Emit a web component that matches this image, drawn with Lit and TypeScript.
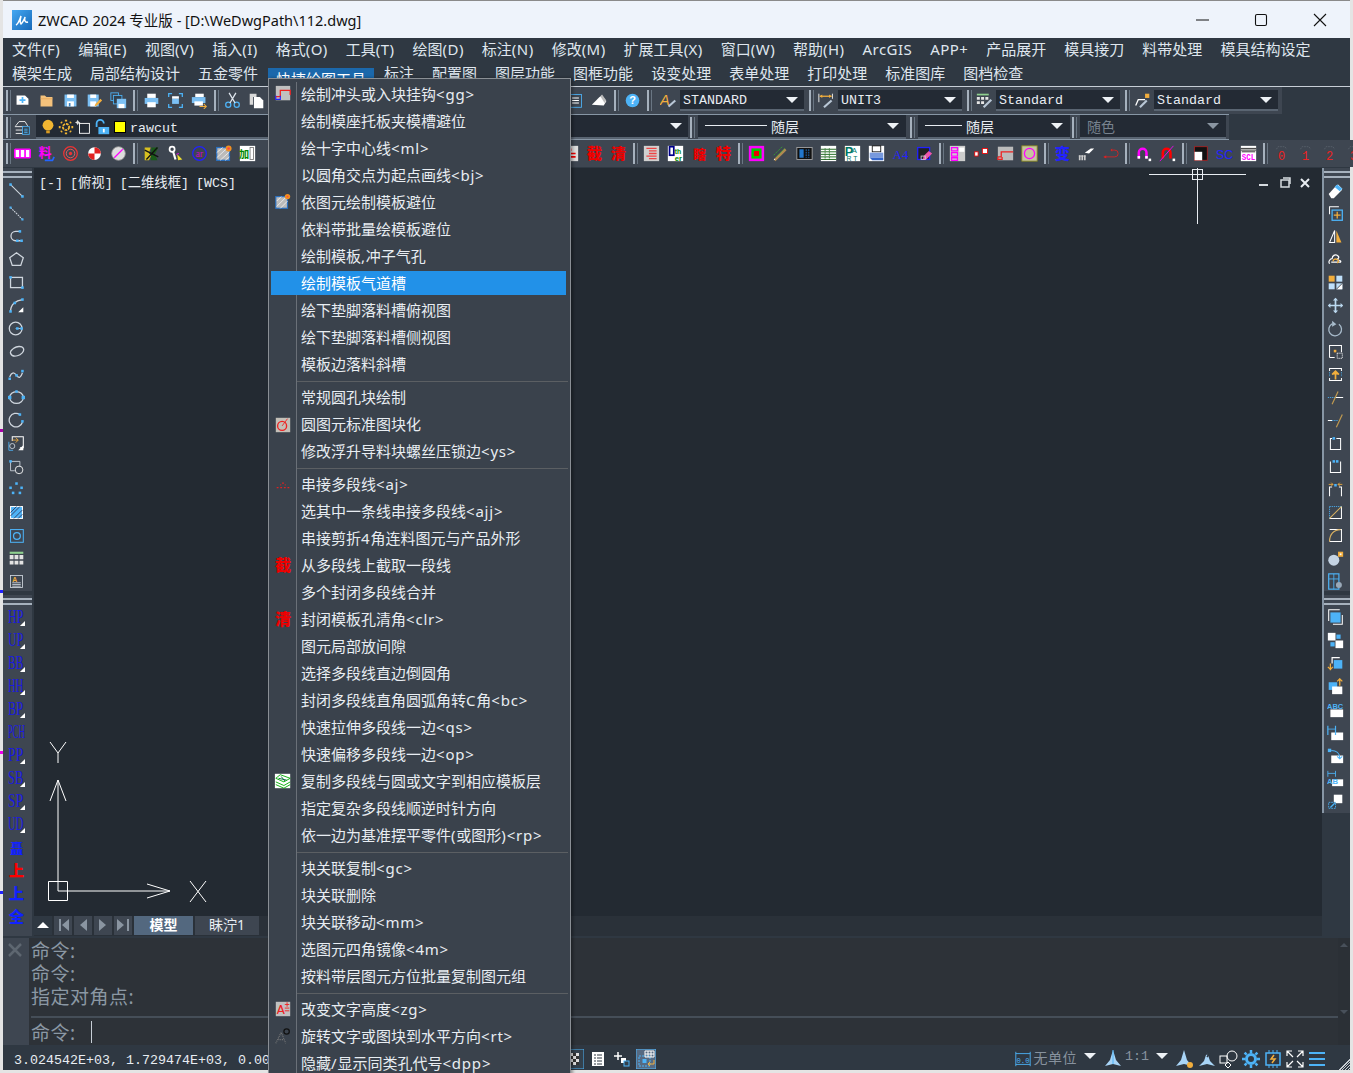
import { LitElement, css, html, svg } from "lit";
import { customElement } from "lit/decorators.js";

const B = "#4db3f7";
const O = "#f2ae3d";
const W = "#ffffff";
const CJK = "Noto Sans CJK SC";

const mk = (inner: unknown, size = 20) => html`<svg class="ic" width=${size} height=${size} viewBox="0 0 20 20">${inner}</svg>`;
const hanzi = (t: string, c: string, size = 18) =>
  svg`<text x="10" y="16.500" text-anchor="middle" font-family=${CJK} font-weight="900" font-size=${size} fill=${c}>${t}</text>`;
const paper = (c = "#ddd") => svg`<rect x="1" y="1" width="18" height="18" fill=${c}/>`;
// ascii runs get a little extra tracking, they come out narrower than in the reference
const latin = (t: string) =>
  t.split(/([\x20-\x7e]+)/).map((p, i) => (i % 2 ? html`<i class="lat">${p}</i>` : p));

// top toolbars
const top1 = {
  newf: svg`<path d="M3 4h10l4 4v7H3z" fill=${W}/><path d="M10 6v7M6.500 9.500h7" stroke=${B} stroke-width="2"/>`,
  open: svg`<path d="M3 4h5l2 2h7v11H3z" fill="#f4c27c"/><path d="M3 8h14" stroke="#e6a657"/>`,
  save: svg`<rect x="3" y="3" width="14" height="14" fill="#7cc0f4"/><rect x="6" y="3" width="8" height="4" fill=${W}/><rect x="6" y="11" width="8" height="6" fill=${W}/><rect x="8" y="13" width="2" height="4" fill="#3c82bb"/>`,
  saveas: svg`<rect x="2" y="3" width="13" height="14" fill="#7cc0f4"/><rect x="5" y="3" width="7" height="4" fill=${W}/><rect x="5" y="11" width="7" height="6" fill=${W}/><path d="M10 17l1-3 6-6 2 2-6 6z" fill=${O}/>`,
  saveall: svg`<rect x="1" y="1" width="9" height="9" fill="none" stroke=${B}/><rect x="4" y="4" width="10" height="10" fill="#33404c" stroke=${B}/><rect x="8" y="8" width="11" height="11" fill="#7cc0f4"/><rect x="10" y="14" width="7" height="5" fill=${W}/>`,
  print: svg`<rect x="5" y="2" width="10" height="5" fill=${W}/><rect x="2" y="7" width="16" height="7" fill="#7cc0f4"/><rect x="5" y="12" width="10" height="6" fill=${W}/>`,
  preview: svg`<path d="M2 6V2h4M14 2h4v4M18 14v4h-4M6 18H2v-4" fill="none" stroke=${B} stroke-width="1.500"/><rect x="6" y="5" width="8" height="3" fill=${W}/><rect x="6" y="8" width="8" height="6" fill="#7cc0f4"/>`,
  plot: svg`<rect x="5" y="2" width="10" height="4" fill=${W}/><rect x="1" y="6" width="16" height="7" fill="#7cc0f4"/><rect x="4" y="11" width="10" height="5" fill=${W}/><path d="M10 17h8M15 14l3 3-3 3" fill="none" stroke=${O} stroke-width="1.200"/>`,
  cut: svg`<circle cx="5" cy="15" r="3" fill="none" stroke=${B} stroke-width="1.500"/><circle cx="15" cy="15" r="3" fill="none" stroke=${B} stroke-width="1.500"/><path d="M7 13L14 1M13 13L6 1" stroke="#dfe6ee" stroke-width="1.500"/>`,
  copy: svg`<path d="M2 2h8v4H6v9H2z" fill="#d8d8d8"/><path d="M7 6h7l4 4v9H7z" fill=${W}/>`,
  doc: svg`<rect x="2" y="3" width="15" height="15" fill="none" stroke=${B}/><path d="M6 7h8M6 10h8M6 13h8" stroke=${W} stroke-width="1.200"/>`,
  erase: svg`<path d="M1 15l9-9 3-2 5 7-3 5z" fill=${W}/><path d="M11 5l2-2 5 7-2 3z" fill="#bbb"/>`,
  help: svg`<circle cx="10" cy="10" r="8" fill=${B}/><text x="10" y="14.500" text-anchor="middle" font-family="Liberation Sans" font-size="13" font-weight="700" fill=${W}>?</text>`,
  textstyle: svg`<text x="0" y="15" font-family="Liberation Sans" font-size="17" font-style="italic" fill=${O}>A</text><path d="M10 17l8-7" stroke="#b9c7d6" stroke-width="2.500"/>`,
  dimstyle: svg`<path d="M1 2v10M17 2v6" stroke=${W}/><path d="M2 5h14" stroke=${O} stroke-width="1.500"/><path d="M2 5l3-2v4zM16 5l-3-2v4z" fill=${O}/><path d="M7 18l9-8" stroke="#b9c7d6" stroke-width="2.500"/>`,
  tablestyle: svg`<rect x="1" y="2" width="14" height="2" fill="#8fd08f"/><path d="M1 6h3.500v3H1zM6 6h3.500v3H6zM11 6h3.500v3H11zM1 11h3.500v3H1zM6 11h3.500v3H6z" fill="#e6e6e6"/><path d="M9 18l9-9" stroke="#b9c7d6" stroke-width="2.500"/>`,
  leader: svg`<rect x="13" y="2" width="5" height="5" fill=${O}/><path d="M2 16l3-7h8" fill="none" stroke=${W} stroke-width="1.500"/><path d="M7 18l8-8" stroke="#b9c7d6" stroke-width="2.500"/>`,
  layers: svg`<path d="M2 8l4-5h7l3 5" fill="none" stroke=${W}/><path d="M1 9h10M2 13h8M2 17h8" stroke=${W}/><rect x="10" y="9" width="8" height="9" fill="#33404c" stroke=${B}/><path d="M12 12h4M12 14h4M12 16h4" stroke=${B}/>`,
};

const row2icons = html`
  ${mk(svg`<circle cx="10" cy="8" r="6" fill="#f2b632"/><rect x="8" y="14" width="4" height="3" fill="#d99a20"/>`)}
  ${mk(svg`<circle cx="10" cy="10" r="3.500" fill="none" stroke="#f2b632" stroke-width="2" stroke-dasharray="3 1"/><path d="M10 2v2M10 16v2M2 10h2M16 10h2M4.500 4.500l1 1M14.500 14.500l1 1M15.500 4.500l-1 1M4.500 15.500l1-1" stroke="#f2b632" stroke-width="2.500"/>`)}
  ${mk(svg`<rect x="5" y="6" width="11" height="11" fill="none" stroke=${W}/><path d="M3 2l1 2 2 1-2 1-1 2-1-2-2-1 2-1z" fill="#ddd"/>`)}
  ${mk(svg`<path d="M4 10V6a4 4 0 0 1 8 0" fill="none" stroke=${B} stroke-width="2"/><rect x="6" y="10" width="12" height="8" fill=${B}/><rect x="11" y="12" width="2" height="4" fill=${W}/>`)}
`;

const row3left = [
  svg`<rect x="1" y="5" width="18" height="10" fill=${W}/><path d="M1 5h18M1 15h18" stroke="#f0f" stroke-width="2"/><path d="M1 5v10M7 5v10M13 5v10M19 5v10" stroke="#f0f" stroke-width="2"/>`,
  svg`<text x="1" y="14" font-family=${CJK} font-size="15" font-weight="700" fill="#f0f">料</text><path d="M8 18h9l2-4" fill="none" stroke="#26f" stroke-width="2"/>`,
  svg`<circle cx="10" cy="10" r="8" fill="none" stroke="#e33" stroke-width="1.500"/><circle cx="10" cy="10" r="5" fill="none" stroke="#e66"/><circle cx="10" cy="10" r="2" fill="#e33"/>`,
  svg`<circle cx="10" cy="10" r="7.500" fill=${W}/><path d="M10 10V2.500A7.500 7.500 0 0 1 17.500 10zM10 10v7.500A7.500 7.500 0 0 1 2.500 10z" fill="#e02020"/>`,
  svg`<circle cx="10" cy="10" r="8" fill="#ddd" stroke="#999"/><path d="M5 15L15 5" stroke="#f0f" stroke-width="1.500"/>`,
];
const row3mid = [
  svg`<path d="M2 3h7l-2 7 3 2-3 6H2z" fill="#d8c020"/><path d="M10 3l8 0-4 8 3 7-8 0z" fill="#1a5a1a"/><path d="M2 6l16 8M4 17L17 3" stroke="#111" stroke-width="1.500"/>`,
  svg`<circle cx="6" cy="5" r="3" fill="none" stroke=${W} stroke-width="2"/><path d="M7 7l3 10" stroke=${W} stroke-width="2.500"/><path d="M12 11l6 6-5 1z" fill="#f0e030"/><path d="M11 11l3-1" stroke="#f0f"/>`,
  svg`<circle cx="10" cy="10" r="8" fill="none" stroke="#22f" stroke-width="1.500"/><text x="10" y="14" text-anchor="middle" font-family="Liberation Serif" font-size="11" fill="#c0c">ar</text>`,
  svg`<rect x="2" y="3" width="15" height="15" fill="#bbb" stroke="#2a70c0" stroke-width="1.500"/><path d="M2 9l7-6M2 15l13-12M6 18L17 8M12 18l5-4" stroke="#eee"/><circle cx="16" cy="4" r="3.500" fill="#f29020"/><circle cx="16" cy="4" r="1.500" fill="#f44"/>`,
  svg`<rect x="1" y="1" width="18" height="18" fill=${W}/><text x="0" y="15" font-family=${CJK} font-size="12" font-weight="700" fill="#080">加</text><rect x="13" y="3" width="4" height="14" fill="none" stroke="#777"/>`,
];
const row3right = [
  [svg`<rect x="1" y="1" width="18" height="18" fill="#ddd"/><path d="M4 10h12M10 4v3M8 14h8" stroke="#e00" stroke-width="2"/>`, hanzi("截", "#e00"), hanzi("清", "#e00")],
  [
    svg`${paper("#d0d0d0")}<path d="M4 4h12M7 7h9M7 10h9M4 13h12M7 16h9" stroke="#e44" stroke-width="1.500"/>`,
    svg`${paper(W)}<rect x="2" y="1" width="7" height="12" fill="#00008a"/><rect x="4" y="3" width="3" height="8" fill=${W}/><text x="9" y="11" font-family="Liberation Sans" font-weight="700" font-size="8" fill="#080">th</text><text x="9" y="19" font-family="Liberation Sans" font-weight="700" font-size="9" fill="#080">er</text>`,
    hanzi("瞎", "#e00", 15),
    hanzi("特", "#e00"),
  ],
  [
    svg`<rect x="1" y="1" width="18" height="18" fill="#f0f"/><rect x="4" y="4" width="12" height="12" fill="#0c0"/><rect x="7" y="7" width="6" height="6" fill="#e00"/>`,
    svg`<path d="M3 18L16 5" stroke="#b08a50" stroke-width="3"/><path d="M2 12L12 2M5 14L15 4" stroke="#3a3" stroke-dasharray="2 1"/><path d="M2 18l2-1-1-1z" fill=${W}/>`,
    svg`<rect x="1" y="3" width="18" height="14" fill="#111" stroke="#aaa"/><rect x="4" y="5" width="5" height="10" fill="#27c"/><path d="M12 5v10M15 5v10" stroke="#27c" stroke-dasharray="2 1"/>`,
    svg`${paper(W)}<path d="M1 5h18M1 8h18M1 11h18M1 14h18M1 17h18" stroke="#050"/><path d="M6 4v14M11 4v14" stroke="#050" stroke-dasharray="1 1"/>`,
    svg`${paper(W)}<text x="1" y="13" font-family="Liberation Sans" font-weight="700" font-size="15" fill="#076">P</text><text x="9" y="9" font-family="Liberation Sans" font-size="9" fill="#076">A</text><text x="3" y="19" font-family="Liberation Sans" font-size="8" fill="#076">R</text><text x="11" y="19" font-family="Liberation Sans" font-size="8" fill="#076">T</text>`,
    svg`${paper(W)}<rect x="5" y="1" width="10" height="7" fill="none" stroke="#111"/><path d="M2 9h16v6H2z" fill="#79d"/><path d="M2 15l3 3h13v-3" fill="#36c"/>`,
    svg`<text x="10" y="16" text-anchor="middle" font-family="Liberation Serif" font-size="15" fill="#22f">A4</text>`,
    svg`<rect x="2" y="3" width="14" height="14" fill="#222" stroke="#22f" stroke-width="1.500"/><path d="M8 17l1-4 6-6 4 3-7 7z" fill="#e5a"/><rect x="6" y="13" width="5" height="4" fill="none" stroke="#ccc"/>`,
  ],
  [
    svg`<rect x="1" y="1" width="18" height="18" fill="#ccc"/><path d="M3 3h7v4H3zM3 9h7v4H3zM3 15h7v3H3z" fill="none" stroke="#f0f" stroke-width="1.500"/><path d="M12 3h6v5h-6z" fill=${W}/>`,
    svg`<rect x="2" y="8" width="4" height="5" fill=${W} stroke="#e00"/><rect x="11" y="4" width="6" height="6" fill=${W} stroke="#e00"/>`,
    svg`<rect x="1" y="2" width="18" height="16" fill="#bbb"/><path d="M1 14h4V8h14M5 8v6M1 14v3h5v-3" fill="none" stroke="#e22" stroke-width="1.500"/>`,
    svg`<rect x="1" y="1" width="18" height="18" fill="#c6c2a0" stroke="#8a8a20"/><circle cx="10" cy="10" r="6" fill="none" stroke="#f0f" stroke-width="1.500"/>`,
  ],
  [
    hanzi("变", "#22f"),
    svg`<path d="M2 18v-6M5 18v-6M8 18v-6" stroke="#ccc" stroke-width="2"/><path d="M1 13h8" stroke="#ccc"/><path d="M8 9l7-5h4l-6 6z" fill=${W}/>`,
    svg`<path d="M2 14h13a4 4 0 0 0 0-8h-4" fill="none" stroke="#d22"/><path d="M2 14l3-2v4zM12 4l-2 2 2 2" fill="#d22"/>`,
  ],
  [
    svg`<path d="M3 16V9a6 6 0 0 1 12 0v7h-3V9a3 3 0 0 0-6 0v7z" fill="#f0f"/><rect x="3" y="13" width="3" height="3" fill=${W}/><rect x="12" y="13" width="3" height="3" fill=${W}/><rect x="16" y="16" width="3" height="3" fill=${W}/>`,
    svg`<path d="M3 16V9a6 6 0 0 1 12 0v7h-3V9a3 3 0 0 0-6 0v7z" fill="#f00"/><path d="M1 19L17 1" stroke="#f0f"/><rect x="16" y="16" width="3" height="3" fill=${W}/>`,
  ],
  [
    svg`<rect x="3" y="2" width="15" height="16" fill="#111" stroke="#a22"/><rect x="3" y="8" width="9" height="10" fill=${W}/>`,
    svg`<text x="10" y="16" text-anchor="middle" font-family="Liberation Sans" font-size="16" fill="#22f" textLength="20" lengthAdjust="spacingAndGlyphs">SC</text>`,
    svg`${paper(W)}<path d="M1 4h18M1 6h18" stroke="#111"/><path d="M2 8h16" stroke="#111"/><text x="2" y="18" font-family="Liberation Mono" font-weight="700" font-size="10" fill="#f0f" textLength="16" lengthAdjust="spacingAndGlyphs">SCL</text>`,
  ],
];
const dimTag = (n: string) =>
  svg`<path d="M4 5l2-3h8l2 3" fill="none" stroke="#59616b" stroke-dasharray="2 1"/><text x="10" y="18" text-anchor="middle" font-family="Liberation Mono" font-size="14" fill="#e22">${n}</text>`;

// side toolbars
const Q = "#cfd6de";
const dot = (x: number, y: number, s = 3) => svg`<rect x=${x - s / 2} y=${y - s / 2} width=${s} height=${s} fill=${B}/>`;
const leftTools = [
  svg`<path d="M3 3l14 14" stroke=${Q} stroke-width="1.200"/>${dot(3, 3)}${dot(17, 17)}`,
  svg`<path d="M3 3l14 14" stroke=${Q} stroke-width="1.200" stroke-dasharray="2 1"/>${dot(3, 3, 2.5)}${dot(17, 17, 2.5)}`,
  svg`<path d="M14 4H9a5 5 0 0 0 0 11h6" fill="none" stroke=${Q} stroke-width="1.500"/>${dot(14, 4)}${dot(11, 15)}${dot(16, 15)}`,
  svg`<path d="M10 2l8 6-3 9H5L2 8z" fill="none" stroke=${Q} stroke-width="1.500"/>`,
  svg`<rect x="3" y="4" width="14" height="12" fill="none" stroke=${Q} stroke-width="1.500"/>${dot(3, 4)}${dot(17, 16)}`,
  svg`<path d="M3 17C3 9 9 4 17 3" fill="none" stroke=${Q} stroke-width="1.500"/>${dot(3, 17)}${dot(17, 3)}${dot(8, 7)}<path d="M12 18l6-6v6z" fill=${W}/>`,
  svg`<circle cx="9" cy="10" r="7.500" fill="none" stroke=${Q} stroke-width="1.500"/><path d="M9 10h8" stroke=${Q}/>${dot(11, 10)}${dot(16, 10)}`,
  svg`<path d="M3 12c-1-3 2-4 4-6 3-2 9-3 11 0 2 4-3 8-7 9-4 1-7 0-8-3z" fill="none" stroke=${Q} stroke-width="1.500"/>`,
  svg`<path d="M2 13c2-6 5-6 8-2s5 3 7-3" fill="none" stroke=${Q} stroke-width="1.500"/>${dot(2, 15)}${dot(10, 11)}${dot(17, 6)}`,
  svg`<ellipse cx="10" cy="10" rx="8" ry="7" fill="none" stroke=${Q} stroke-width="1.500"/>${dot(2, 10, 4)}${dot(18, 10, 4)}${dot(10, 3, 3)}`,
  svg`<path d="M14 3a8 8 0 1 0 3 9" fill="none" stroke=${Q} stroke-width="1.500"/>${dot(14, 3)}${dot(17, 11)}`,
  svg`<path d="M5 7V2h13v13h-4" fill="none" stroke=${W} stroke-width="1.200"/><path d="M1 8v10h5" fill="none" stroke=${B}/><circle cx="5" cy="13" r="3" fill="none" stroke=${Q}/><path d="M12 18l6-6v6z" fill=${W}/><path d="M5 6h7M9 3l3 3-3 3" fill="none" stroke=${O}/>`,
  svg`<path d="M3 4v11h5M3 4h11v6" fill="none" stroke=${Q}/>${dot(3, 4)}<circle cx="13" cy="14" r="4.500" fill="none" stroke=${W}/>`,
  svg`${dot(10, 3, 3)}${dot(3, 8, 3)}${dot(16, 8, 3)}${dot(6, 14, 3)}${dot(14, 14, 3)}`,
  svg`<rect x="3" y="3" width="14" height="14" fill=${B} stroke=${W} stroke-width="1.200"/><path d="M3 10l7-7M3 14L14 3M7 17L17 7M12 17l5-5" stroke="#335"/>`,
  svg`<rect x="3" y="3" width="15" height="15" fill="none" stroke=${B} stroke-width="1.200"/><circle cx="10.500" cy="10.500" r="4" fill="none" stroke=${B} stroke-width="1.500"/>`,
  svg`<rect x="2" y="2" width="16" height="2.500" fill="#8fd08f"/><path d="M2 6h4.500v5H2zM7.700 6h4.500v5H7.700zM13.500 6H18v5h-4.500zM2 12.500h4.500V17H2zM7.700 12.500h4.500V17H7.700zM13.500 12.500H18V17h-4.500z" fill="#e3e3e3"/>`,
  svg`<rect x="3" y="3" width="14" height="14" fill="none" stroke=${Q}/><text x="5" y="10" font-family="Liberation Sans" font-weight="700" font-size="8" fill=${O}>A</text><path d="M5 11.500h10M5 13.500h10M5 15.500h10" stroke=${Q}/>`,
];
const blueTags = ["HP", "UP", "BB", "HH", "BP", "PCH", "PP", "SB", "SP", "UD"];
const tagIcon = (t: string) =>
  mk(svg`<text x="0" y="17" font-family="Liberation Serif" font-size="21" fill="#1a1ae0" textLength=${t.length > 2 ? 20 : 18} lengthAdjust="spacingAndGlyphs">${t}</text>${t === "PCH" ? "" : svg`<path d="M14 20l6-6v6z" fill=${W}/>`}`);
const leftLower = [
  hanzi("矗", "#12f", 15),
  hanzi("上", "#f00", 18),
  hanzi("上", "#12f", 18),
  hanzi("全", "#12f", 18),
  svg`<path d="M2 12l5-4 8 3 3 4-10 1z" fill="#e00"/>`,
];
const rightTools = [
  svg`<path d="M2 14l9-10 2-1 5 5-1 2-9 9H5z" fill=${W}/><path d="M9 6l3-3 6 5-3 3z" fill=${B}/>`,
  svg`<path d="M3 11V2h11" fill="none" stroke=${W} stroke-width="1.200"/><rect x="6" y="6" width="12" height="12" fill="none" stroke=${B} stroke-width="1.500"/><path d="M12 8v8M8 12h8" stroke=${O} stroke-width="1.500"/>`,
  svg`<path d="M9 3L3 17h6z" fill="none" stroke=${W} stroke-width="1.200"/><path d="M11 3l6 14h-6z" fill=${O}/>`,
  svg`<path d="M3 15c-2-3 1-6 3-6 0-4 5-6 7-3 2 1 0 4-2 4 3 1 6 1 5 3H5" fill="none" stroke=${W} stroke-width="1.400"/><path d="M7 12c1-3 3-3 5-2s2 3 0 4" fill="none" stroke=${O} stroke-width="1.500"/>`,
  svg`<rect x="2" y="2" width="7" height="7" fill=${O}/><rect x="11" y="2" width="7" height="7" fill="#bfe0fa"/><rect x="2" y="11" width="7" height="7" fill="#bfe0fa"/><rect x="11" y="11" width="7" height="7" fill="#bfe0fa"/><path d="M11 18l7-7v7z" fill=${W}/><path d="M11 18l7-7" stroke="#333"/>`,
  svg`<path d="M10 2v16M2 10h16" stroke="#bcd9f0" stroke-width="2"/><path d="M10 1l3 3H7zM10 19l3-3H7zM1 10l3-3v6zM19 10l-3-3v6z" fill="#bcd9f0"/>`,
  svg`<path d="M14 5a7.500 7.500 0 1 1-8-.5" fill="none" stroke="#a9bccc" stroke-width="1.500"/><path d="M6 1v7l5-3z" fill="#a9bccc"/>`,
  svg`<path d="M3 17V3h14v8M3 17h6" fill="none" stroke=${W} stroke-width="1.200"/><rect x="8" y="8" width="3" height="3" fill=${O}/><rect x="12" y="12" width="6" height="6" fill="none" stroke=${W} stroke-dasharray="1.500 1"/>`,
  svg`<path d="M3 6V3h14v3M3 14v3h14v-3" fill="none" stroke=${W} stroke-width="1.200"/><path d="M3 7v6M17 7v6" stroke=${B} stroke-dasharray="1 1"/><path d="M10 16V9M6 10l4-4 4 4" stroke=${O} stroke-width="2" fill=${O}/>`,
  svg`<path d="M1 10h9" stroke=${B} stroke-dasharray="1.500 1"/><path d="M10 10h9" stroke=${W} stroke-width="1.200"/><path d="M6 18L13 3" stroke="#c09a50" stroke-width="1.400"/>`,
  svg`<path d="M1 10h5" stroke=${W} stroke-width="1.200"/><path d="M6 10h7" stroke=${B} stroke-dasharray="1.500 1"/><path d="M11 18L18 3" stroke="#c09a50" stroke-width="1.400"/>`,
  svg`<path d="M6 4H4v13h12V4h-5" fill="none" stroke=${W} stroke-width="1.200"/>${dot(8, 4, 3)}`,
  svg`<path d="M4 4v13h12V4" fill="none" stroke=${W} stroke-width="1.200"/>${dot(8, 4, 3)}${dot(12, 4, 3)}`,
  svg`<path d="M3 18V7h3M17 18V7h-3" fill="none" stroke=${W} stroke-width="1.200"/>${dot(10, 5, 3)}<path d="M2 4h5M5 2l2 2-2 2M18 4h-5M15 2l-2 2 2 2" fill="none" stroke=${O}/>`,
  svg`<path d="M3 3h14M3 3v14" fill="none" stroke=${B} stroke-dasharray="1.500 1"/><path d="M17 3v14H3" fill="none" stroke=${W} stroke-width="1.200"/><path d="M3 17L17 3" stroke="#d9b060" stroke-width="1.200"/>`,
  svg`<path d="M3 3h14v14H3" fill="none" stroke=${W} stroke-width="1.200"/><path d="M3 17C3 9 8 3 16 3" fill="none" stroke="#d9b060" stroke-width="1.400"/>`,
  svg`<circle cx="8" cy="12" r="6.500" fill="#c4d3e3"/><rect x="13" y="2" width="6" height="6" fill=${O}/><rect x="15" y="4" width="2" height="2" fill="#fff"/>`,
  svg`<rect x="2" y="1" width="12" height="18" fill="none" stroke=${B} stroke-width="1.400"/><path d="M2 7h12M8 1v18" stroke=${B}/><circle cx="14" cy="14" r="3.500" fill="#9aa9b8"/>`,
];
const rightLower = [
  svg`<path d="M2 14V1h13" fill="none" stroke=${W} stroke-width="1.200"/><rect x="4" y="4" width="12" height="12" fill=${B}/><path d="M18 7v11H7" fill="none" stroke=${W} stroke-width="1.200"/>`,
  svg`<rect x="1" y="1" width="9" height="9" fill=${W}/><rect x="11" y="3" width="5" height="5" fill=${B}/><rect x="4" y="12" width="5" height="5" fill=${B}/><rect x="10" y="10" width="9" height="9" fill=${W}/>`,
  svg`<path d="M6 10V3h9" fill="none" stroke=${W} stroke-width="1.400"/><rect x="8" y="6" width="10" height="10" fill=${B}/><path d="M4 10v8M1 14l3 3 3-3" fill="none" stroke=${O} stroke-width="1.500"/>`,
  svg`<rect x="2" y="5" width="10" height="9" fill=${B}/><rect x="6" y="10" width="12" height="9" fill=${W}/><path d="M15 9V2M12 4l3-3 3 3" fill="none" stroke=${O} stroke-width="1.500"/>`,
  svg`<rect x="4" y="10" width="15" height="9" fill=${W}/><text x="0" y="9" font-family="Liberation Sans" font-weight="700" font-size="8.500" fill=${B} textLength="19" lengthAdjust="spacingAndGlyphs">ABC</text>`,
  svg`<rect x="5" y="10" width="14" height="9" fill=${W}/><path d="M1 2v11M10 2v11" stroke=${B} stroke-width="1.400"/><path d="M1 6h9" stroke=${B}/>`,
  svg`<rect x="5" y="10" width="14" height="9" fill=${W}/><rect x="1" y="2" width="4" height="4" fill=${B}/><path d="M5 4c6 0 10 3 10 9M12 11l3 3 3-3" fill="none" stroke=${B} stroke-width="1.200"/>`,
  svg`<rect x="6" y="11" width="13" height="8" fill=${W}/><path d="M1 1v7M10 1v7M1 4h9" stroke=${B}/><text x="0" y="17" font-family="Liberation Sans" font-weight="700" font-size="9" fill=${B}>AB</text>`,
  svg`<rect x="8" y="2" width="10" height="10" fill=${W}/><rect x="2" y="11" width="8" height="7" fill="#33404c" stroke=${B} stroke-dasharray="2 1"/><path d="M4 17l5-5" stroke=${B} stroke-width="1.500"/>`,
];

const menuGroups: [string, unknown?][][] = [
  [
    ["绘制冲头或入块挂钩<gg>", svg`<rect x="2" y="1" width="16" height="16" fill="#c0c0c0"/><path d="M2 13h5V6h11v5" fill="none" stroke="#e22" stroke-width="1.400"/><path d="M2 12v4h5v-4" fill="none" stroke="#22f" stroke-width="1.200"/>`],
    ["绘制模座托板夹模槽避位"],
    ["绘十字中心线<ml>"],
    ["以圆角交点为起点画线<bj>"],
    ["依图元绘制模板避位", svg`<rect x="2" y="4" width="13" height="13" fill="#bbb" stroke="#2a70c0" stroke-width="1.300"/><path d="M3 9l5-5M3 15L14 4M7 17l8-8" stroke="#eee"/><circle cx="15" cy="4" r="3" fill="#f29020"/><circle cx="15" cy="4" r="1" fill="#f44"/>`],
    ["依料带批量绘模板避位"],
    ["绘制模板,冲子气孔"],
    ["绘制模板气道槽"],
    ["绘下垫脚落料槽俯视图"],
    ["绘下垫脚落料槽侧视图"],
    ["模板边落料斜槽"],
  ],
  [
    ["常规圆孔块绘制"],
    ["圆图元标准图块化", svg`<rect x="2" y="2" width="16" height="16" fill="#c4c0b8"/><circle cx="9" cy="11" r="5" fill="none" stroke="#e22" stroke-width="1.500"/><path d="M9 11l6-8" stroke="#e22"/>`],
    ["修改浮升导料块螺丝压锁边<ys>"],
  ],
  [
    ["串接多段线<aj>", svg`<path d="M3 14h2M7 14h2M11 14h2M15 14h2M9 9h2M7 11h1M12 11h1" stroke="#d22" stroke-width="1.400"/>`],
    ["选其中一条线串接多段线<ajj>"],
    ["串接剪折4角连料图元与产品外形"],
    ["从多段线上截取一段线", hanzi("截", "#e00")],
    ["多个封闭多段线合并"],
    ["封闭模板孔清角<clr>", hanzi("清", "#e00")],
    ["图元局部放间隙"],
    ["选择多段线直边倒圆角"],
    ["封闭多段线直角圆弧角转C角<bc>"],
    ["快速拉伸多段线一边<qs>"],
    ["快速偏移多段线一边<op>"],
    ["复制多段线与圆或文字到相应模板层", svg`<rect x="1" y="2" width="17" height="16" fill=${W}/><path d="M2 7l5-4 11 4-7 4zM2 11l9 4 7-4M2 14l9 4 7-4" fill="none" stroke="#0a0"/><path d="M5 7l9 2M8 5l4 5" stroke="#063"/>`],
    ["指定复杂多段线顺逆时针方向"],
    ["依一边为基准摆平零件(或图形)<rp>"],
  ],
  [
    ["块关联复制<gc>"],
    ["块关联删除"],
    ["块关联移动<mm>"],
    ["选图元四角镜像<4m>"],
    ["按料带层图元方位批量复制图元组"],
  ],
  [
    ["改变文字高度<zg>", svg`<rect x="2" y="2" width="16" height="16" fill="#c0c0c0"/><text x="3" y="16" font-family="Liberation Mono" font-size="15" fill="#e22">A</text><path d="M12 5h5M14.500 2.500v5M12 9h5M12 12h5" stroke="#e22"/>`],
    ["旋转文字或图块到水平方向<rt>", svg`<path d="M2 18L8 6l5 12M5 14h6" fill="none" stroke="#7a7a7a" stroke-dasharray="1 1" stroke-width="1.300"/><circle cx="14" cy="5" r="3" fill="none" stroke="#111" stroke-width="1.400"/>`],
    ["隐藏/显示同类孔代号<dpp>"],
  ],
];

const menuRow1 = ["文件(F)", "编辑(E)", "视图(V)", "插入(I)", "格式(O)", "工具(T)", "绘图(D)", "标注(N)", "修改(M)", "扩展工具(X)", "窗口(W)", "帮助(H)", "ArcGIS", "APP+", "产品展开", "模具接刀", "料带处理", "模具结构设定"];
const menuRow2 = ["模架生成", "局部结构设计", "五金零件", "快捷绘图工具", "标注", "配置图", "图层功能", "图框功能", "设变处理", "表单处理", "打印处理", "标准图库", "图档检查"];

const caret = html`<i class="caret"></i>`;
const combo = (label: unknown, cls = "") => html`<div class="combo ${cls}"><span class="combo-text">${label}</span>${caret}</div>`;
const sep = html`<i class="sep"></i>`;
const sepw = html`<i class="sep wide"></i>`;

@customElement("app-root")
export class AppRoot extends LitElement {
  static styles = css`
    :host {
      display: block;
      width: 1353px;
      height: 1073px;
      overflow: hidden;
      position: relative;
      background:
        linear-gradient(#0000 0 40%, #a0a 40% 40.3%, #0000 40.3% 55%, #22f 55% 55.3%, #0000 55.3% 70%, #e0e 70% 70.3%, #0000 70.3% 83%, #22f 83% 83.3%, #0000 83.3%) 0 0 / 3px 100% no-repeat,
        #e4e4e4;
      font-family: "Noto Sans", "Noto Sans CJK SC", sans-serif;
      color: #e8edf2;
      font-size: 15px;
    }
    .ic { display: block; flex: none; }
    .lat { font-style: normal; letter-spacing: .8px; }
    .win {
      margin: 0 3px;
      height: 1070px;
      display: flex;
      flex-direction: column;
      background: #2f3842;
    }
    .title {
      height: 38px;
      box-sizing: border-box;
      border-top: 1px solid #8a8a8a;
      background: #eef3fb;
      color: #111;
      display: flex;
      align-items: center;
      padding-left: 9px;
      gap: 6px;
      font-size: 14.500px;
    }
    .logo { width: 20px; height: 20px; }
    .title-text { flex: 1; }
    .winbtns { display: flex; }
    .winbtns svg { display: block; width: 59px; height: 30px; }
    .menu-row {
      height: 24px;
      display: flex;
      align-items: center;
      padding-left: 9px;
      gap: 18px;
      white-space: nowrap;
      line-height: 22px;
      padding-bottom: 2px;
      box-sizing: border-box;
      color: #dfe6ee;
    }
    .menu-row .lat { letter-spacing: .45px; }
    .menu-row span.on {
      background: #1b68ab;
      color: #fff;
      margin: 0 -8px;
      padding: 0 8px;
      height: 18px;
      line-height: 22px;
      align-self: flex-end;
      margin-bottom: -2px;
    }
    .rule { height: 1px; background: #c7ced6; }
    .tb {
      display: flex;
      align-items: center;
      background: #3e4651;
      box-sizing: border-box;
      padding-left: 3px;
      gap: 4px;
      white-space: nowrap;
    }
    .tb > .ic { width: 17px; height: 17px; margin: 0 1.500px; }
    .tb1 { height: 27px; width: 1279px; }
    .tb2 { height: 26px; width: 1226px; border-top: 1px solid #8796a5; border-bottom: 1px solid #8796a5; }
    .tb3 { height: 27px; width: 1350px; overflow: hidden; }
    .grip, .sep {
      flex: none;
      display: block;
      width: 5px;
      height: 21px;
      border-left: 2px solid #a6b1bd;
      border-right: 1px solid #6a7683;
      box-sizing: border-box;
    }
    .grip { margin-right: -3px; }
    .sep { margin: 0 -2px 0 1px; }
    .sep.wide { margin: 0 -1px 0 1px; }
    .tb2 .sep { margin: 0 -1px 0 -2px; }
    .tb3 .sep { margin: 0 -1px 0 1px; }
    .gap { flex: none; width: 291px; }
    .gap3 { flex: none; width: 295px; }
    .push { flex: none; width: 3px; margin-left: -4px; }
    .combo {
      flex: none;
      height: 21px;
      background: #232a34;
      border-bottom: 2px solid #5a6572;
      box-sizing: border-box;
      display: flex;
      align-items: center;
      justify-content: space-between;
      padding: 1px 6px 0 3px;
      font: 13.330px "Liberation Mono", "Noto Sans CJK SC", monospace;
      color: #e8edf2;
      width: 124px;
      margin-left: -2px;
    }
    .combo-text { display: flex; align-items: center; gap: 4px; }
    .caret {
      display: block;
      flex: none;
      width: 0;
      height: 0;
      border: 6px solid transparent;
      border-top: 6px solid #eef2f6;
      border-bottom: 0;
    }
    .tb2 .combo { height: 24px; margin-left: 0; }
    .tb2 .layer { width: 652px; padding-top: 4px; }
    .layer .combo-text { gap: 0; }
    .layer .ic { width: 18px; height: 18px; margin-top: -3px; }
    .layer .caret { margin-top: -4px; }
    .swatch { width: 12px; height: 12px; background: #ff0; border: 1px solid #000; box-sizing: border-box; margin: -3px 4px 0 3px; }
    .tb2 .lt1 { width: 208px; margin-right: 2px; }
    .tb2 .lt2 { width: 152px; }
    .tb2 .lt3 { width: 146px; color: #78838f; }
    .lt3 .caret { border-top-color: #8a95a1; }
    .tb2 .ltype { font-family: "Noto Sans CJK SC", sans-serif; font-size: 14px; padding: 0 7px 1px 7px; }
    .ltype b { display: block; width: var(--w); height: 1px; background: #e8edf2; }
    .body { flex: 1; display: flex; min-height: 0; padding-top: 1px; }
    .side {
      flex: none;
      display: flex;
      flex-direction: column;
      align-items: center;
      box-sizing: border-box;
    }
    .side-block { width: 100%; background: #3e4651; display: flex; flex-direction: column; align-items: center; gap: 3px; box-sizing: border-box; }
    .side-grip { flex: none; width: 100%; height: 7px; border-top: 2px solid #a6b1bd; border-bottom: 2px solid #a6b1bd; box-sizing: border-box; margin: 3px 0 -1px; }
    .side-block .ic { width: 17px; height: 17px; margin: 1.500px 0 1.500px -3px; }
    .lside { padding-right: 2px; width: 31px; }
    .lblock1 { height: 423px; margin-bottom: 4px; }
    .lblock2 { flex: 1; overflow: hidden; }
    .rside { width: 28px; }
    .rcol { width: 100%; border-left: 2px solid #8796a5; box-sizing: border-box; display: flex; flex-direction: column; }
    .rblock1 { height: 423px; margin-bottom: 4px; }
    .rblock2 { height: 218px; }
    .canvas-col { flex: 1; min-width: 0; display: flex; flex-direction: column; }
    .canvas { flex: 1; background: #232a32; position: relative; }
    .vp { position: absolute; left: 5px; top: 4px; font: 13.330px "Liberation Mono", "Noto Sans CJK SC", monospace; word-spacing: -1px; color: #e8edf2; }
    .ucs { position: absolute; left: 0; bottom: 7px; }
    .cursor { position: absolute; left: 1115px; top: 0; }
    .vpbtns { position: absolute; right: 12px; top: 9px; }
    .tabs { height: 20px; display: flex; gap: 2px; background: #2a3139; }
    .tabs > div { background: #3e4651; height: 19px; display: flex; align-items: center; justify-content: center; width: 18px; padding-bottom: 1px; box-sizing: border-box; }
    .tabs > div.up { background: #2f3842; }
    .tabs .model { width: 59px; background: #53687f; color: #fff; font-weight: 700; font-size: 14px; line-height: 16px; }
    .tabs .layout { width: 64px; color: #e8edf2; font-size: 14px; line-height: 16px; }
    .tabs .rest { flex: 1; background: #2a3139; }
    .cmd { height: 107px; margin-top: 2px; display: flex; background: #2d3238; }
    .cmd-x { width: 24px; background: #3e4651; flex: none; display: flex; justify-content: center; padding-top: 5px; box-sizing: border-box; }
    .cmd-main { flex: 1; display: flex; flex-direction: column; border-left: 2px solid #3e4651; padding-left: 2px; color: #8b98a4; font-size: 19px; letter-spacing: .5px; }
    .hist { height: 80px; flex: none; box-sizing: border-box; padding-top: 2px; line-height: 23px; border-bottom: 2px solid #454e58; }
    .input { flex: 1; display: flex; align-items: center; gap: 15px; padding-bottom: 2px; }
    .input i { display: block; width: 1px; height: 22px; background: #c7ced6; }
    .scroll { width: 12px; flex: none; background: #2b3036; display: flex; flex-direction: column; align-items: center; justify-content: space-between; padding: 4px 0 30px; box-sizing: border-box; }
    .status {
      height: 25px;
      display: flex;
      align-items: center;
      font: 13.330px "Liberation Mono", monospace;
      color: #e8edf2;
      padding: 2px 0 0 11px;
      box-sizing: border-box;
      position: relative;
    }
    .coords { width: 550px; margin-top: 3px; }
    .st-mid { display: flex; align-items: center; gap: 4px; }
    .st-right { margin-left: auto; display: flex; align-items: center; gap: 2px; padding-right: 23px; color: #87929e; }
    .st-right span { font: 14px "Noto Sans CJK SC", sans-serif; letter-spacing: .5px; margin-bottom: 4px; }
    .st-right .ratio { font: 13.330px "Liberation Mono", monospace; letter-spacing: 0; }
    .st-right .caret { margin: 0 5px 6px 5px; }
    .resize { position: absolute; right: 0; bottom: 0; width: 12px; height: 12px; background: repeating-linear-gradient(135deg, #2f3842 0 1px, #c6ccd2 1px 2px); clip-path: polygon(100% 0, 100% 100%, 0 100%); }
    .menu {
      position: absolute;
      left: 268px;
      top: 78px;
      width: 303px;
      height: 1000px;
      box-sizing: border-box;
      background: #3a424c;
      border: 1px solid #8a8f95;
      padding: 2px 4px 0 2px;
      color: #e8edf2;
      white-space: nowrap;
      box-shadow: 2px 0 3px #0005;
    }
    .menu::before { content: ""; position: absolute; left: 27px; top: 3px; bottom: 0; width: 1px; background: #6a7078; }
    .mi { height: 27px; padding: 1px 0 2px; box-sizing: border-box; }
    .mi div { height: 24px; display: flex; align-items: center; position: relative; }
    .mi.hot div { background: #2291e8; color: #fff; }
    .mi svg { position: absolute; left: 3px; top: 3px; }
    .mi span { position: relative; top: -1px; margin-left: 30px; }
    .msep { height: 5.500px; display: flex; align-items: center; padding: 1px 0 0 26px; margin-right: -2px; box-sizing: border-box; }
    .msep.wide { height: 6.500px; }
    .msep::after { content: ""; display: block; flex: 1; height: 1px; background: #5b5f63; }
  `;

  render() {
    return html`
      <div class="win">
        <div class="title">
          <svg class="logo" viewBox="0 0 20 20"><defs><linearGradient id="lg" x1="0" y1="0" x2="1" y2="1"><stop offset="0" stop-color="#45a8f2"/><stop offset="1" stop-color="#1668b8"/></linearGradient></defs><rect width="20" height="20" fill="url(#lg)"/><path d="M4 15c2-1 4-6 5-9-1 4-1 7 0 8 2-2 4-6 4-7-1 3 0 6 3 5" fill="none" stroke="#fff" stroke-width="1.500"/></svg>
          <span class="title-text">ZWCAD 2024 专业版 - [D:\\WeDwgPath\\112.dwg]</span>
          <div class="winbtns">
            <svg viewBox="0 0 59 30"><path d="M23 15h13" stroke="#111" stroke-width="1"/></svg>
            <svg viewBox="0 0 59 30"><rect x="23.500" y="9.500" width="11" height="11" rx="1.500" fill="none" stroke="#111" stroke-width="1.100"/></svg>
            <svg viewBox="0 0 59 30"><path d="M23 9l12 12M35 9L23 21" stroke="#111" stroke-width="1.100"/></svg>
          </div>
        </div>
        <div class="menu-row">${menuRow1.map((m) => html`<span>${latin(m)}</span>`)}</div>
        <div class="menu-row">${menuRow2.map((m, i) => html`<span class=${i === 3 ? "on" : ""}>${m}</span>`)}</div>
        <div class="rule"></div>

        <div class="tb tb1">
          <i class="grip"></i>
          ${[top1.newf, top1.open, top1.save, top1.saveas, top1.saveall].map((t) => mk(t))}
          ${sepw}
          ${[top1.print, top1.preview, top1.plot].map((t) => mk(t))}
          ${sepw}
          ${[top1.cut, top1.copy].map((t) => mk(t))}
          <i class="gap"></i>
          ${mk(top1.doc)} ${mk(top1.erase)}
          ${sepw} ${mk(top1.help)} ${sepw}
          <i class="push"></i>
          ${mk(top1.textstyle)} ${combo("STANDARD")} ${sep}
          ${mk(top1.dimstyle)} ${combo("UNIT3")} ${sep}
          ${mk(top1.tablestyle)} ${combo("Standard")} ${sep}
          ${mk(top1.leader)} ${combo("Standard")}
        </div>
        <div class="tb tb2">
          <i class="grip"></i>
          ${mk(top1.layers)}
          ${combo(html`${row2icons}<i class="swatch"></i>rawcut`, "layer")}
          ${sep}
          ${combo(html`<b style="--w:62px"></b>随层`, "lt1 ltype")}
          ${sep}
          ${combo(html`<b style="--w:37px"></b>随层`, "lt2 ltype")}
          ${sep}
          ${combo("随色", "lt3 ltype")}
        </div>
        <div class="tb tb3">
          <i class="grip"></i>
          ${row3left.map((t) => mk(t))}
          ${sep}
          ${row3mid.map((t) => mk(t))}
          <i class="gap3"></i>
          ${row3right.map((g) => html`${g.map((t) => mk(t))}${sep}`)}
          ${["0", "1", "2", "3"].map((n) => mk(dimTag(n)))}
        </div>

        <div class="body">
          <div class="side lside">
            <div class="side-block lblock1"><i class="side-grip"></i>${leftTools.map((t) => mk(t))}</div>
            <div class="side-block lblock2">
              <i class="side-grip"></i>
              ${blueTags.map(tagIcon)}
              ${leftLower.map((t) => mk(t))}
            </div>
          </div>
          <div class="canvas-col">
            <div class="canvas">
              <div class="vp">[-] [俯视] [二维线框] [WCS]</div>
              <svg class="ucs" width="180" height="170" viewBox="0 0 180 170">
                <path d="M16 3l8 11 8-11M24 14v10" fill="none" stroke="#fff"/>
                <path d="M24 152V41M16 62l8-21 8 21" fill="none" stroke="#fff"/>
                <path d="M14.500 142.500h19v19h-19zM24 152h112M113 145l23 7-23 7" fill="none" stroke="#fff"/>
                <path d="M156 142l16 21M172 142l-16 21" stroke="#fff"/>
              </svg>
              <svg class="cursor" width="100" height="56" viewBox="0 0 100 56"><path d="M0 6.500h97M48.500 0v56" stroke="#e8edf2"/><rect x="43.500" y="1.500" width="10" height="10" fill="#232a32" stroke="#e8edf2"/><path d="M48.500 1v11M43 6.500h11" stroke="#e8edf2"/></svg>
              <svg class="vpbtns" width="52" height="12" viewBox="0 0 52 12"><path d="M1 7h9v2H1z" fill="#d6dbe0"/><path d="M23 3h8v7h-8z" fill="none" stroke="#d6dbe0" stroke-width="1.500"/><path d="M25 1h7v6" fill="none" stroke="#d6dbe0" stroke-width="1.500"/><path d="M43 2l8 8M51 2l-8 8" stroke="#e8edf2" stroke-width="2"/></svg>
            </div>
            <div class="tabs">
              <div class="up"><svg width="12" height="8"><path d="M0 7l6-6 6 6z" fill="#fff"/></svg></div>
              <div><svg width="12" height="12"><path d="M2 0h2v12H2zM12 0v12L5 6z" fill="#8a95a1"/></svg></div>
              <div><svg width="12" height="12"><path d="M10 0v12L3 6z" fill="#8a95a1"/></svg></div>
              <div><svg width="12" height="12"><path d="M2 0v12l7-6z" fill="#8a95a1"/></svg></div>
              <div><svg width="12" height="12"><path d="M10 0h2v12h-2zM0 0v12l7-6z" fill="#8a95a1"/></svg></div>
              <div class="model">模型</div>
              <div class="layout">眛泞1</div>
              <div class="rest"></div>
            </div>
          </div>
          <div class="side rside">
            <div class="rcol">
              <div class="side-block rblock1"><i class="side-grip"></i>${rightTools.map((t) => mk(t))}</div>
              <div class="side-block rblock2"><i class="side-grip"></i>${rightLower.map((t) => mk(t))}</div>
            </div>
          </div>
        </div>

        <div class="cmd">
          <div class="cmd-x"><svg width="14" height="14"><path d="M1 1l12 12M13 1L1 13" stroke="#5e6771" stroke-width="2.500"/></svg></div>
          <div class="cmd-main">
            <div class="hist">命令:<br />命令:<br />指定对角点:</div>
            <div class="input">命令:<i></i></div>
          </div>
          <div class="scroll">
            <svg width="8" height="6"><path d="M0 5l4-4 4 4z" fill="#48505a"/></svg>
            <svg width="8" height="6"><path d="M0 1l4 4 4-4z" fill="#48505a"/></svg>
          </div>
        </div>

        <div class="status">
          <span class="coords">3.024542E+03, 1.729474E+03, 0.0000</span>
          <div class="st-mid">
            <svg width="20" height="20" viewBox="0 0 20 20"><rect x="0" y="0" width="20" height="20" fill="#33404c" stroke=${B}/><rect x="3" y="4" width="12" height="12" fill="#ddd"/><path d="M3 4h3v3H3zM9 4h3v3H9zM6 7h3v3H6zM12 7h3v3h-3zM3 10h3v3H3zM9 10h3v3H9zM6 13h3v3H6zM12 13h3v3h-3z" fill="#333"/></svg>
            ${mk(svg`<rect x="4" y="3" width="12" height="14" fill=${W}/><path d="M6 6h2M9 6h5M6 9h2M9 9h5M6 12h2M9 12h5M6 15h2M9 15h5" stroke="#2f3842"/>`)}
            ${mk(svg`<path d="M6 3v8M2 7h8" stroke=${W} stroke-width="1.500"/><rect x="9" y="9" width="5" height="5" fill=${W}/><rect x="12" y="12" width="5" height="5" fill="#33404c" stroke=${B}/>`)}
            <svg width="20" height="20" viewBox="0 0 20 20"><rect width="20" height="20" fill="#566a82" stroke=${B}/><rect x="3" y="7" width="11" height="10" fill="none" stroke=${B} stroke-dasharray="2 1"/><rect x="6.500" y="10" width="4" height="4" fill=${B}/><path d="M9 2h9v6h-9zM12 2v6M15 2v6M9 5h9" fill="none" stroke=${W}/><path d="M12 15h6v-4M12 15l2-2M12 15l2 2" fill="none" stroke=${O}/></svg>
          </div>
          <div class="st-right">
            ${mk(svg`<path d="M2 2v16M18 2v16" stroke=${B}/><path d="M2 4h16M2 16h16" stroke=${B}/><text x="10" y="14" text-anchor="middle" font-family="Liberation Mono" font-size="8" fill=${B}>0.0</text>`, 18)}
            <span>无单位</span>${caret}
            ${mk(svg`<path d="M10 1l3 10 5 6-8-2-8 2 5-6z" fill="#a9d5f7"/><path d="M10 1v14" stroke=${B}/>`)}
            <span class="ratio">1:1</span>${caret}
            ${mk(svg`<path d="M9 1l3 10 5 6-8-2-8 2 5-6z" fill="#a9d5f7"/><circle cx="15" cy="16" r="3" fill=${O}/>`)}
            ${mk(svg`<path d="M10 3l3 9 5 5-8-2-8 2 5-5z" fill="#a9d5f7"/><path d="M12 1l-3 4h3l-2 3" stroke="#2f3842" fill="none" stroke-width="1.500"/>`)}
            ${mk(svg`<rect x="1" y="7" width="7" height="7" fill="none" stroke=${W}/><circle cx="13" cy="7" r="5" fill="none" stroke=${W}/><path d="M9 13l3 3-3 3-3-3z" fill="none" stroke=${W}/>`)}
            ${mk(svg`<circle cx="10" cy="10" r="4.500" fill="none" stroke=${B} stroke-width="3"/><path d="M10 1v3M10 16v3M1 10h3M16 10h3M3.600 3.600l2 2M14.400 14.400l2 2M16.400 3.600l-2 2M5.600 14.400l-2 2" stroke=${B} stroke-width="2.500"/>`)}
            ${mk(svg`<rect x="3" y="4" width="14" height="12" fill="none" stroke=${B} stroke-width="1.500"/><path d="M6 1v3M10 1v3M14 1v3M6 16v3M10 16v3M14 16v3" stroke=${B}/><path d="M11 6l-3 4h4l-3 4" fill="none" stroke=${O} stroke-width="1.500"/>`)}
            ${mk(svg`<path d="M2 7V2h5M13 2h5v5M18 13v5h-5M7 18H2v-5M2 2l6 6M18 2l-6 6M2 18l6-6M18 18l-6-6" fill="none" stroke=${W} stroke-width="1.200"/>`)}
            ${mk(svg`<path d="M2 4h16M2 10h16M2 16h16" stroke=${B} stroke-width="2"/>`)}
          </div>
          <i class="resize"></i>
        </div>
      </div>

      <div class="menu">
        ${menuGroups.map(
          (group, gi) => html`
            ${gi > 0 ? html`<div class="msep ${gi === 1 || gi === 3 ? "wide" : ""}"></div>` : ""}
            ${group.map(
              ([label, icon]) => html`<div class="mi ${label === "绘制模板气道槽" ? "hot" : ""}">
                <div>${icon ? mk(icon, 18) : ""}<span>${latin(label)}</span></div>
              </div>`
            )}
          `
        )}
      </div>
    `;
  }
}
